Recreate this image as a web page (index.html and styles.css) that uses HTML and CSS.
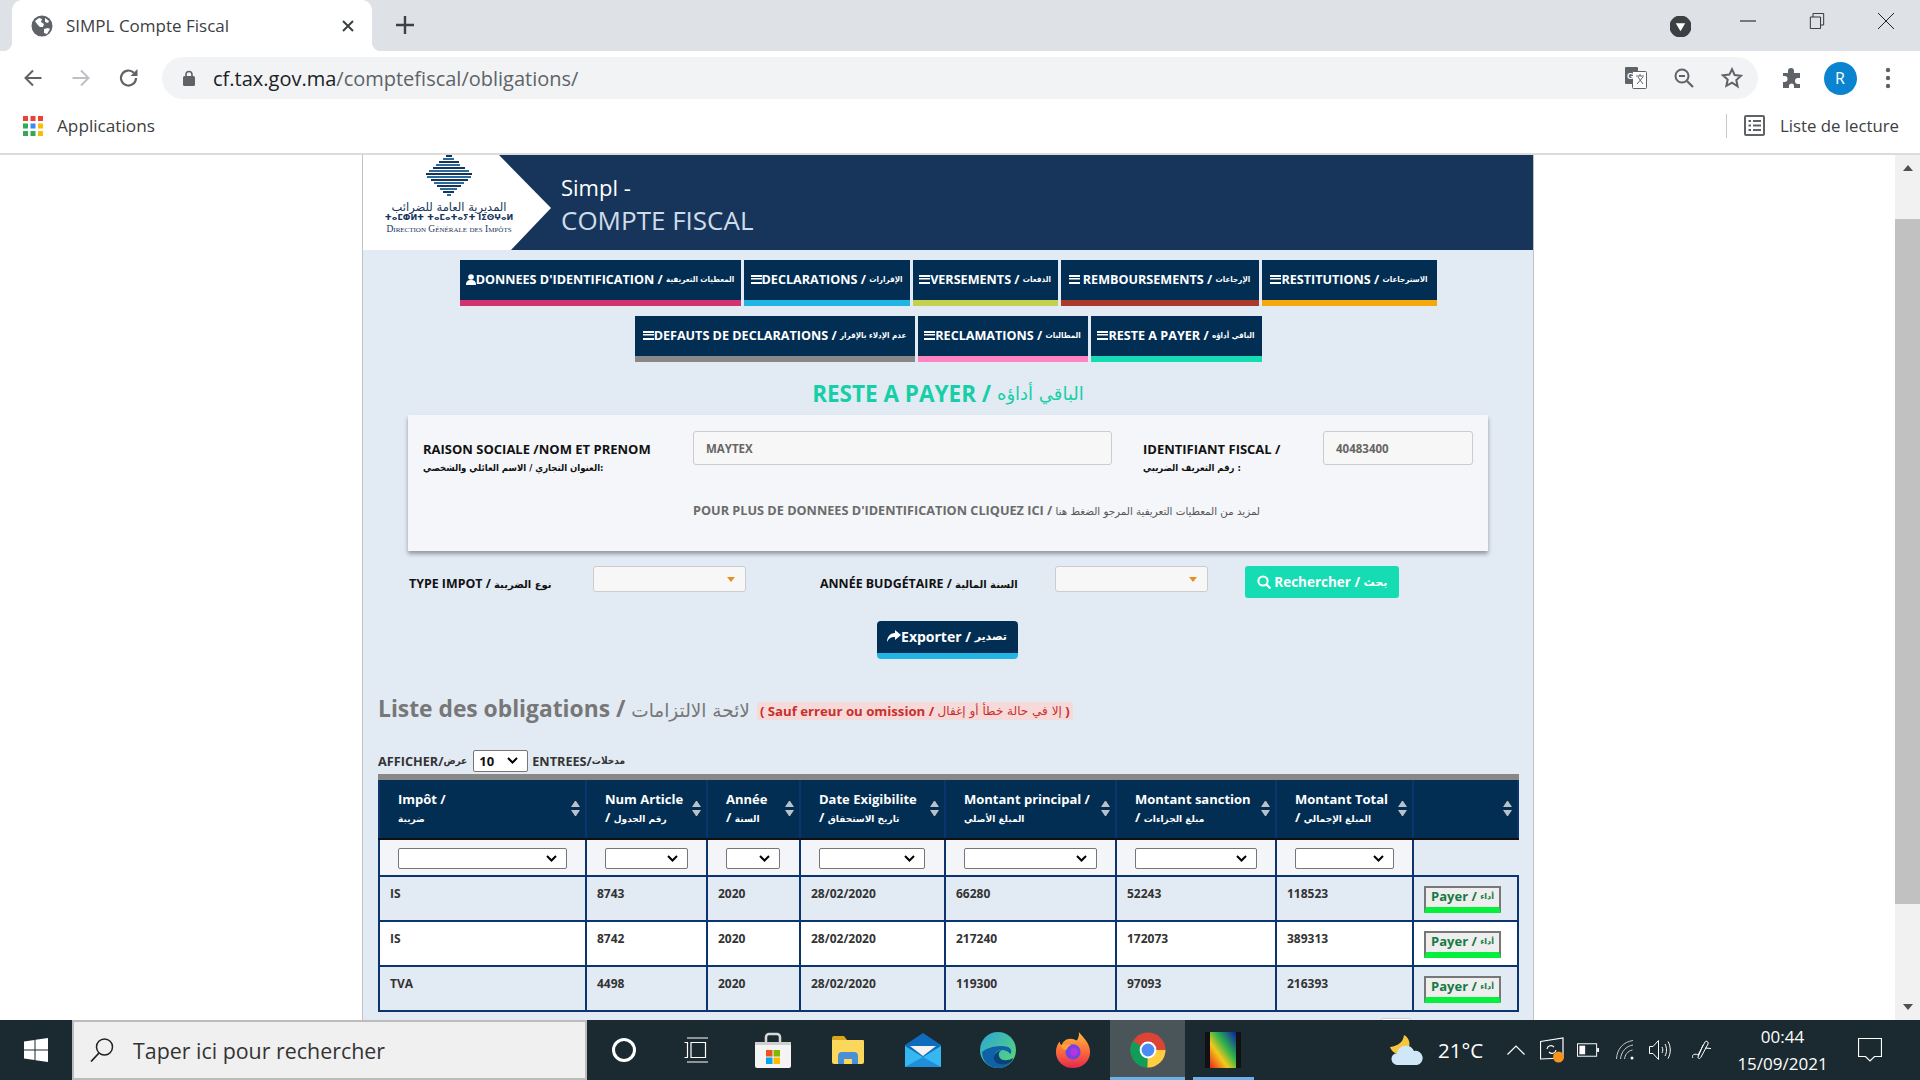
FILE: index.html
```html
<!DOCTYPE html>
<html lang="fr">
<head>
<meta charset="utf-8">
<title>SIMPL Compte Fiscal</title>
<link rel="stylesheet" href="styles.css">
</head>
<body>
<div class="screen">
  <header class="browser">
    <div class="tabstrip">
      <div class="tab">
        <svg class="favicon" viewBox="0 0 22 22"><circle cx="11" cy="11" r="10.5" fill="#5f6368"/><path d="M4 6l4-3 3 1-1 3 3 2-1 3h-3L6 9zM13 14l4-1 2 1-3 5-3-1zM14 3l4 3-1 2-3-1z" fill="#fff"/></svg>
        <span class="tab-title">SIMPL Compte Fiscal</span>
        <svg class="tab-close" viewBox="0 0 12 12"><path d="M1 1l10 10M11 1L1 11" stroke="#3c4043" stroke-width="2"/></svg>
      </div>
      <svg class="newtab" viewBox="0 0 18 18"><path d="M9 0v18M0 9h18" stroke="#3c4043" stroke-width="2.4"/></svg>
      <div class="win-group">
        <div class="tabsearch"><svg viewBox="0 0 20 20"><circle cx="10" cy="10" r="10.5" fill="#3c4043"/><path d="M5.5 7h9L10 14.5z" fill="#fff"/></svg></div>
        <div class="winbtn"><svg viewBox="0 0 16 16" class="winicon"><path d="M0 8h16" stroke="#111" stroke-width="1"/></svg></div>
        <div class="winbtn"><svg viewBox="0 0 16 18" class="winicon"><path d="M.5 4.500h11.500v13H.5zM3.500 4.500V.5h12v13H12" fill="none" stroke="#222" stroke-width="1"/></svg></div>
        <div class="winbtn"><svg viewBox="0 0 16 16" class="winicon"><path d="M0 0l16 16M16 0L0 16" stroke="#222" stroke-width="1"/></svg></div>
      </div>
    </div>
    <div class="toolbar">
      <div class="tool"><svg viewBox="0 0 20 20" class="ico20"><path d="M18.500 10H2.500M10 2.500L2.500 10l7.500 7.500" fill="none" stroke="#5f6368" stroke-width="2"/></svg></div>
      <div class="tool"><svg viewBox="0 0 20 20" class="ico20"><path d="M1.500 10h16M10 2.500l7.500 7.500-7.500 7.500" fill="none" stroke="#bdc1c6" stroke-width="2"/></svg></div>
      <div class="tool"><svg viewBox="0 0 22 22" class="ico22"><path d="M18 11a7.500 7.500 0 1 1-2.200-5.300" fill="none" stroke="#5f6368" stroke-width="2.200"/><path d="M19.500 2v7h-7z" fill="#5f6368"/></svg></div>
      <div class="omnibox">
        <svg class="lock" viewBox="0 0 12 16"><path d="M3 7V4.500a3 3 0 0 1 6 0V7" fill="none" stroke="#5f6368" stroke-width="1.600"/><rect x="0" y="6" width="12" height="10" rx="1.500" fill="#5f6368"/></svg>
        <span class="url"><span class="url-host">cf.tax.gov.ma</span>/comptefiscal/obligations/</span>
        <div class="omni-tools">
          <div class="tool"><svg viewBox="0 0 22 22" class="ico22"><rect x="0" y="0" width="13" height="17" rx="1" fill="#5f6368"/><rect x="7.500" y="4.500" width="14" height="17" rx="1" fill="#fff" stroke="#5f6368"/><text x="2" y="12" class="gly">G</text><path d="M11 9h8M15 7v2M12 17l6-7M13 10l5 7" stroke="#5f6368" stroke-width="1" fill="none"/></svg></div>
          <div class="tool"><svg viewBox="0 0 20 20" class="ico20"><circle cx="8" cy="8" r="6.500" fill="none" stroke="#5f6368" stroke-width="2"/><path d="M5 8h6" stroke="#5f6368" stroke-width="2"/><path d="M13 13l6 6" stroke="#5f6368" stroke-width="2.200"/></svg></div>
          <div class="tool"><svg viewBox="0 0 24 24" class="ico22"><path d="M12 2.500l2.900 6.300 6.900.8-5.100 4.600 1.400 6.800L12 17l-6.100 3.500 1.400-6.800-5.100-4.600 6.900-.8z" fill="none" stroke="#5f6368" stroke-width="2.200"/></svg></div>
        </div>
      </div>
      <div class="tool tool-first"><svg viewBox="0 0 22 22" class="ico22"><path d="M2 6h5V4a3 3 0 0 1 6 0v2h6v5h-2a3 3 0 0 0 0 6h2v4h-6v-2a2.500 2.500 0 0 0-5 0v2H2v-6h1.500a3 3 0 0 0 0-6H2z" fill="#5f6368"/></svg></div>
      <div class="tool"><span class="avatar">R</span></div>
      <div class="tool"><svg viewBox="0 0 6 22" class="dots"><circle cx="3" cy="3" r="2.200" fill="#5f6368"/><circle cx="3" cy="11" r="2.200" fill="#5f6368"/><circle cx="3" cy="19" r="2.200" fill="#5f6368"/></svg></div>
    </div>
    <div class="bookmarks">
      <svg class="apps" viewBox="0 0 20 20"><rect width="5" height="5" fill="#ea4335"/><rect x="7.500" width="5" height="5" fill="#ea4335"/><rect x="15" width="5" height="5" fill="#ea4335"/><rect y="7.500" width="5" height="5" fill="#34a853"/><rect x="7.500" y="7.500" width="5" height="5" fill="#4285f4"/><rect x="15" y="7.500" width="5" height="5" fill="#fbbc05"/><rect y="15" width="5" height="5" fill="#34a853"/><rect x="7.500" y="15" width="5" height="5" fill="#34a853"/><rect x="15" y="15" width="5" height="5" fill="#fbbc05"/></svg>
      <span class="bm-label">Applications</span>
      <span class="bm-sep"></span>
      <svg class="readlist" viewBox="0 0 21 21"><rect x="1" y="1" width="19" height="19" rx="1" fill="none" stroke="#5f6368" stroke-width="2"/><path d="M4.500 6h2.500M9 6h8M4.500 10.500h2.500M9 10.500h8M4.500 15h2.500M9 15h8" stroke="#5f6368" stroke-width="2"/></svg>
      <span class="bm-read">Liste de lecture</span>
    </div>
  </header>

  <main class="viewport">
    <div class="page">
      <div class="banner">
        <div class="logo">
          <svg class="diamond" viewBox="0 0 48 43">
            <g stroke-width="1.800">
              <path d="M21 1h6" stroke="#17355b"/>
              <path d="M18 4h11" stroke="#2a6a9c"/>
              <path d="M14 7h20" stroke="#17355b"/>
              <path d="M11 10h24" stroke="#2a6a9c"/>
              <path d="M8 13h32" stroke="#17355b"/>
              <path d="M4 16h40" stroke="#2a6a9c"/>
              <path d="M1 19h46" stroke="#17355b"/>
              <path d="M2 22h44" stroke="#2a6a9c"/>
              <path d="M6 25h37" stroke="#17355b"/>
              <path d="M9 28h30" stroke="#2a6a9c"/>
              <path d="M12 31h24" stroke="#17355b"/>
              <path d="M15 34h17" stroke="#2a6a9c"/>
              <path d="M18 37h11" stroke="#17355b"/>
              <path d="M22 40h4" stroke="#2a6a9c"/>
            </g>
          </svg>
          <div class="logo-ar">المديرية العامة للضرائب</div>
          <div class="logo-tz">ⵜⴰⵎⵀⵍⵜ ⵜⴰⵎⴰⵜⴰⵢⵜ ⵏⵉⵙⵖⴰⵍ</div>
          <div class="logo-fr">Direction Générale des Impôts</div>
        </div>
        <div class="banner-title">
          <div class="bt-1">Simpl -</div>
          <div class="bt-2">COMPTE FISCAL</div>
        </div>
      </div>

      <nav class="menu">
        <div class="menu-row">
          <a class="mbtn m-1 s-pink"><svg class="i-user" viewBox="0 0 10 11"><circle cx="5" cy="3" r="2.800" fill="#fff"/><path d="M0 11c0-4 2-5 5-5s5 1 5 5z" fill="#fff"/></svg>DONNEES D'IDENTIFICATION / <span class="ar">المعطيات التعريفية</span></a>
          <a class="mbtn m-2 s-blue"><span class="burger"></span>DECLARATIONS / <span class="ar">الإقرارات</span></a>
          <a class="mbtn m-3 s-olive"><span class="burger"></span>VERSEMENTS / <span class="ar">الدفعات</span></a>
          <a class="mbtn m-4 s-red"><span class="burger gap"></span>REMBOURSEMENTS / <span class="ar">الإرجاعات</span></a>
          <a class="mbtn m-5 s-orange"><span class="burger"></span>RESTITUTIONS / <span class="ar">الاسترجاعات</span></a>
        </div>
        <div class="menu-row">
          <a class="mbtn m-6 s-gray"><span class="burger"></span>DEFAUTS DE DECLARATIONS / <span class="ar">عدم الإدلاء بالإقرار</span></a>
          <a class="mbtn m-7 s-rose"><span class="burger"></span>RECLAMATIONS / <span class="ar">المطالبات</span></a>
          <a class="mbtn m-8 s-teal"><span class="burger"></span>RESTE A PAYER / <span class="ar">الباقي أداؤه</span></a>
        </div>
      </nav>

      <h1 class="page-title">RESTE A PAYER / <span class="ar-title">الباقي أداؤه</span></h1>

      <section class="card">
        <div class="card-grid">
          <div class="lbl">RAISON SOCIALE /NOM ET PRENOM<br><span class="ar-lbl">العنوان التجاري / الاسم العائلي والشخصي:</span></div>
          <div class="field">MAYTEX</div>
          <div class="lbl">IDENTIFIANT FISCAL /<br><span class="ar-lbl">رقم التعريف الضريبي :</span></div>
          <div class="field">40483400</div>
        </div>
        <p class="more">POUR PLUS DE DONNEES D'IDENTIFICATION CLIQUEZ ICI / <span class="ar-more">لمزيد من المعطيات التعريفية المرجو الضغط هنا</span></p>
      </section>

      <section class="filters">
        <div class="f-label f-l1">TYPE IMPOT / <span class="ar-f">نوع الضريبة</span></div>
        <div class="dd dd-1"></div>
        <div class="f-label f-l2">ANNÉE BUDGÉTAIRE / <span class="ar-f">السنة المالية</span></div>
        <div class="dd dd-2"></div>
        <button class="search-btn"><svg viewBox="0 0 14 14" class="i-search"><circle cx="6" cy="6" r="4.600" fill="none" stroke="#fff" stroke-width="2"/><path d="M9.500 9.500l4 4" stroke="#fff" stroke-width="2.200"/></svg> Rechercher / <span class="ar-btn">بحث</span></button>
      </section>

      <div class="export-row">
        <button class="export-btn"><svg viewBox="0 0 14 12" class="i-share"><path d="M8 0l6 5-6 5V7C4 7 2 8 0 12 0 7 3 3 8 3z" fill="#fff"/></svg>Exporter / <span class="ar-btn">تصدير</span></button>
      </div>

      <div class="list-head">
        <h2 class="list-title">Liste des obligations / <span class="ar-list">لائحة الالتزامات</span></h2>
        <span class="badge">( Sauf erreur ou omission / <span class="ar-badge">إلا في حالة خطأ أو إغفال</span> )</span>
      </div>

      <div class="entries">
        <span>AFFICHER/</span><span class="ar-sm">عرض</span>
        <select class="len-select"><option>10</option></select>
        <span>ENTREES/</span><span class="ar-sm">مدخلات</span>
      </div>

      <table class="grid">
        <colgroup>
          <col class="c1"><col class="c2"><col class="c3"><col class="c4"><col class="c5"><col class="c6"><col class="c7"><col class="c8">
        </colgroup>
        <thead>
          <tr>
            <th><div class="th-in"><span>Impôt /<br><span class="ar-th">ضريبة</span></span><i class="sort"></i></div></th>
            <th><div class="th-in"><span>Num Article<br>/ <span class="ar-th">رقم الجدول</span></span><i class="sort"></i></div></th>
            <th><div class="th-in"><span>Année<br>/ <span class="ar-th">السنة</span></span><i class="sort"></i></div></th>
            <th><div class="th-in"><span>Date Exigibilite<br>/ <span class="ar-th">تاريخ الاستحقاق</span></span><i class="sort"></i></div></th>
            <th><div class="th-in"><span>Montant principal /<br><span class="ar-th">المبلغ الأصلي</span></span><i class="sort"></i></div></th>
            <th><div class="th-in"><span>Montant sanction<br>/ <span class="ar-th">مبلغ الجزاءات</span></span><i class="sort"></i></div></th>
            <th><div class="th-in"><span>Montant Total<br>/ <span class="ar-th">المبلغ الإجمالي</span></span><i class="sort"></i></div></th>
            <th><div class="th-in th-end"><i class="sort"></i></div></th>
          </tr>
          <tr class="filter-row">
            <td><select class="fs fs1"></select></td>
            <td><select class="fs fs2"></select></td>
            <td><select class="fs fs3"></select></td>
            <td><select class="fs fs4"></select></td>
            <td><select class="fs fs5"></select></td>
            <td><select class="fs fs6"></select></td>
            <td><select class="fs fs7"></select></td>
            <td class="blank"></td>
          </tr>
        </thead>
        <tbody>
          <tr class="odd"><td>IS</td><td>8743</td><td>2020</td><td>28/02/2020</td><td>66280</td><td>52243</td><td>118523</td><td class="act"><button class="pay">Payer / <span class="ar-pay">أداء</span></button></td></tr>
          <tr class="even"><td>IS</td><td>8742</td><td>2020</td><td>28/02/2020</td><td>217240</td><td>172073</td><td>389313</td><td class="act"><button class="pay">Payer / <span class="ar-pay">أداء</span></button></td></tr>
          <tr class="odd"><td>TVA</td><td>4498</td><td>2020</td><td>28/02/2020</td><td>119300</td><td>97093</td><td>216393</td><td class="act"><button class="pay">Payer / <span class="ar-pay">أداء</span></button></td></tr>
        </tbody>
      </table>
      <div class="pager"><span class="pager-box"></span></div>
    </div>

    <div class="scrollbar">
      <svg class="sb-arrow" viewBox="0 0 10 6"><path d="M0 6l5-6 5 6z" fill="#505050"/></svg>
      <div class="sb-track"><div class="sb-thumb"></div></div>
      <svg class="sb-arrow" viewBox="0 0 10 6"><path d="M0 0l5 6 5-6z" fill="#505050"/></svg>
    </div>
  </main>

  <footer class="taskbar">
    <div class="start"><svg viewBox="0 0 24 24" class="winlogo"><path d="M0 3.500l10.500-1.500v9.500H0zM11.500 1.800L24 0v11.500H11.500zM0 12.500h10.500V22L0 20.500zM11.500 12.500H24V24l-12.500-1.800z" fill="#fff"/></svg></div>
    <div class="searchbox">
      <svg viewBox="0 0 24 24" class="mag"><circle cx="14.500" cy="9" r="8" fill="none" stroke="#222" stroke-width="1.500"/><path d="M9 15L1 23.500" stroke="#222" stroke-width="1.800"/></svg>
      <span class="search-text">Taper ici pour rechercher</span>
    </div>
    <div class="slot s-cortana"><span class="cortana"></span></div>
    <div class="slot s-taskview"><svg viewBox="0 0 24 26" class="taskview"><path d="M3 1h21M3 25h21M.5 5.500h3v15h-3M7 5.500h14.500v15H7z" fill="none" stroke="#fff" stroke-width="1.200"/></svg></div>
    <div class="slot"><svg viewBox="0 0 36 36" class="app"><path d="M11 10V5a3 3 0 0 1 3-3h8a3 3 0 0 1 3 3v5" fill="none" stroke="#d8d8d8" stroke-width="2.500"/><path d="M0 10h36v24a2 2 0 0 1-2 2H2a2 2 0 0 1-2-2z" fill="#f4f4f4"/><path d="M0 10h36v3H0z" fill="#cfcfcf"/><rect x="11" y="18" width="6.500" height="6.500" fill="#f25022"/><rect x="18.500" y="18" width="6.500" height="6.500" fill="#7fba00"/><rect x="11" y="25.500" width="6.500" height="6.500" fill="#00a4ef"/><rect x="18.500" y="25.500" width="6.500" height="6.500" fill="#ffb900"/></svg></div>
    <div class="slot"><svg viewBox="0 0 32 28" class="app-folder"><path d="M0 2a2 2 0 0 1 2-2h10l3 4H0z" fill="#d9a51f"/><path d="M0 4h31a1 1 0 0 1 1 1v21a2 2 0 0 1-2 2H2a2 2 0 0 1-2-2z" fill="#fbd75b"/><path d="M6 28v-8a4 4 0 0 1 4-4h12a4 4 0 0 1 4 4v8h-6v-5h-8v5z" fill="#4a90d9"/></svg></div>
    <div class="slot"><svg viewBox="0 0 36 36" class="app"><path d="M18 1L36 13v21a1 1 0 0 1-1 1H1a1 1 0 0 1-1-1V13z" fill="#0f6cbd"/><path d="M5 14h26l-13 10z" fill="#f2f2f2"/><path d="M0 14l18 11 18-11v21H0z" fill="#35b8f1"/><path d="M0 35l18-10 18 10z" fill="#1f8fdb"/></svg></div>
    <div class="slot"><svg viewBox="0 0 36 36" class="app"><defs><linearGradient id="eg" x1="0" y1="0" x2="1" y2="1"><stop offset="0" stop-color="#2aa6d8"/><stop offset="1" stop-color="#5fd86f"/></linearGradient></defs><circle cx="18" cy="18" r="18" fill="url(#eg)"/><path d="M2 20C2 30 10 36 18 36c5 0 9-2 12-5-6 2-13 1-15-4-2-5 2-9 6-9 5 0 8 2 9 4 2-1 2-5-2-7-9-3-22 1-26 5z" fill="#0f62a8"/><path d="M14 27c1 5 8 7 16 4 1-1 3-3 3-5-5 3-11 3-13 0-3-4 0-8 3-8-5 0-10 4-9 9z" fill="#0a4277"/></svg></div>
    <div class="slot"><svg viewBox="0 0 36 38" class="app"><defs><linearGradient id="fg" x1="0" y1="0" x2="0" y2="1"><stop offset="0" stop-color="#ffbd3f"/><stop offset=".5" stop-color="#ff7139"/><stop offset="1" stop-color="#e22850"/></linearGradient></defs><path d="M24 0c4 5 12 11 12 21 0 10-8 17-18 17S0 31 0 21c0-5 2-9 4-11 0 2 1 3 2 4 1-4 5-7 9-7 3 0 5 1 7 2 2-3 3-6 2-9z" fill="url(#fg)"/><circle cx="18" cy="21" r="8" fill="#7542e5"/><circle cx="19" cy="21" r="4" fill="#b833e1"/><path d="M5 14c3-1 8-2 11 0-3 1-4 3-5 5-3 0-5-2-6-5z" fill="#ffa436"/></svg></div>
    <div class="slot slot-active"><svg viewBox="0 0 36 36" class="app"><circle cx="18" cy="18" r="17.500" fill="#db4437"/><path d="M18 18L2.800 9A17.500 17.500 0 0 0 18 35.500z" fill="#0f9d58"/><path d="M18 18h17.500A17.500 17.500 0 0 1 18 35.500l-.6 0z" fill="#ffcd40"/><circle cx="18" cy="18" r="8.400" fill="#fff"/><circle cx="18" cy="18" r="6.400" fill="#4c8bf5"/></svg></div>
    <div class="slot slot-open"><svg viewBox="0 0 36 36" class="app"><defs><linearGradient id="rb" x1="0" y1="1" x2="1" y2="0"><stop offset="0" stop-color="#e8261a"/><stop offset=".35" stop-color="#f4c91b"/><stop offset=".6" stop-color="#32b44a"/><stop offset="1" stop-color="#0a1ea8"/></linearGradient></defs><rect x="0" width="36" height="36" fill="#111"/><rect x="5" width="26" height="36" fill="url(#rb)"/></svg></div>
    <div class="tray">
      <svg viewBox="0 0 34 30" class="t-weather"><path d="M14 0Q13 10 0 12A10 10 0 1 0 14 0z" fill="#f6c63b"/><path d="M8 30a6 6 0 0 1-1-12 9 9 0 0 1 17-2 7 7 0 0 1 3 14z" fill="#cfe7f7"/></svg>
      <span class="t-temp">21°C</span>
      <svg viewBox="0 0 18 10" class="t-caret"><path d="M.5 9.500L9 1l8.500 8.500" fill="none" stroke="#fff" stroke-width="1.200"/></svg>
      <svg viewBox="0 0 24 26" class="t-sync"><path d="M.5 4.500L23 1v20l-22.500 1z" fill="none" stroke="#fff" stroke-width="1.200"/><path d="M7 12a4 4 0 0 1 7-2M16 13a4 4 0 0 1-7 2" fill="none" stroke="#fff" stroke-width="1.200"/><circle cx="18.500" cy="20" r="5.500" fill="#f7931e"/></svg>
      <svg viewBox="0 0 24 14" class="t-batt"><rect x=".5" y=".5" width="20" height="13" fill="none" stroke="#fff"/><rect x="2.500" y="2.500" width="6" height="9" fill="#fff"/><path d="M21 5h2v4h-2z" fill="#fff"/></svg>
      <svg viewBox="0 0 18 20" class="t-wifi"><path d="M.5 19C1 9 7 2 17 .5M4.500 19C5 12 10 6 17 5M8.500 19c.5-4 3-8 8-9" fill="none" stroke="#c6cbcd" stroke-width="1"/><circle cx="16" cy="18" r="1.500" fill="#fff"/></svg>
      <svg viewBox="0 0 22 20" class="t-sound"><path d="M.5 6.500h3.500L9.500.5v19L4 13.500H.5z" fill="none" stroke="#fff" stroke-width="1"/><path d="M13 7c1 2 1 4 0 6M16 4c2 4 2 8 0 12M19 1.500c3 5 3 12 0 17" fill="none" stroke="#fff" stroke-width="1"/></svg>
      <svg viewBox="0 0 20 20" class="t-pen"><path d="M1 18c-2-3 2-5 5-3l7-13c1-2 4 0 3 2l-7 13c-1 2-3 2-3 0l5-12M13 8l6 .5" fill="none" stroke="#fff" stroke-width="1"/></svg>
      <div class="clock"><div>00:44</div><div>15/09/2021</div></div>
      <svg viewBox="0 0 24 24" class="t-notif"><path d="M.5.5h23v18h-7l-4.500 4.500-4.500-4.500h-7z" fill="none" stroke="#fff" stroke-width="1.200"/></svg>
    </div>
  </footer>
</div>
</body>
</html>
```

FILE: styles.css
```css
* { box-sizing: border-box; }
html, body { margin: 0; padding: 0; height: 100%; overflow: hidden; background: #fff; }
body { font-family: "Open Sans", "DejaVu Sans", sans-serif; color: #111; }
svg { display: block; flex: none; }
h1, h2, p { margin: 0; }

.screen { width: 1920px; height: 1080px; display: flex; flex-direction: column; }

/* Browser chrome */
.browser { flex: none; height: 155px; display: flex; flex-direction: column; border-bottom: 2px solid #dcdcdc; }
.tabstrip { height: 51px; background: #dee1e6; display: flex; align-items: flex-end; padding-left: 12px; }
.tab { width: 360px; height: 51px; background: #fff; border-radius: 10px 10px 0 0; display: flex; align-items: center; padding-left: 19px; position: relative; }
.tab::before, .tab::after { content: ""; position: absolute; bottom: 0; width: 9px; height: 9px; }
.tab::before { left: -9px; background: radial-gradient(circle at 0 0, transparent 9px, #fff 9.500px); }
.tab::after { right: -9px; background: radial-gradient(circle at 100% 0, transparent 9px, #fff 9.500px); }
.favicon { width: 22px; height: 22px; }
.tab-title { margin-left: 13px; width: 268px; font-size: 17px; color: #3c4043; white-space: nowrap; }
.tab-close { width: 12px; height: 12px; margin-left: 8px; }
.newtab { width: 18px; height: 18px; margin: 0 0 17px 24px; }
.win-group { margin-left: auto; height: 51px; display: flex; }
.tabsearch { width: 21px; margin-right: 22px; padding-top: 16px; }
.tabsearch svg { width: 21px; height: 21px; }
.winbtn { width: 69px; height: 51px; display: flex; justify-content: center; padding-top: 13px; }
.winicon { width: 16px; height: 16px; }

.toolbar { height: 54px; background: #fff; display: flex; align-items: center; padding-left: 9px; }
.tool { width: 48px; height: 42px; display: flex; align-items: center; justify-content: center; }
.tool-first { margin-left: 10px; }
.ico20 { width: 20px; height: 20px; }
.ico22 { width: 22px; height: 22px; }
.dots { width: 6px; height: 22px; }
.gly { font: bold 9px "Liberation Sans", sans-serif; fill: #fff; }
.avatar { width: 33px; height: 33px; border-radius: 50%; background: #0a84d0; color: #fff; font-size: 16px; display: flex; align-items: center; justify-content: center; }
.omnibox { width: 1596px; height: 42px; margin-left: 9px; background: #f1f3f4; border-radius: 21px; display: flex; align-items: center; padding-left: 21px; }
.lock { width: 12px; height: 16px; }
.url { margin-left: 18px; font-size: 20px; color: #5f6368; white-space: nowrap; }
.url-host { color: #202124; }
.omni-tools { margin-left: auto; margin-right: 2px; display: flex; }

.bookmarks { height: 48px; background: #fff; display: flex; align-items: center; padding: 0 0 7px 23px; }
.apps { width: 20px; height: 20px; }
.bm-label { margin-left: 14px; font-size: 17.200px; color: #3c4043; }
.bm-sep { margin-left: auto; width: 1px; height: 24px; background: #c6c8ca; }
.readlist { width: 21px; height: 21px; margin-left: 17px; }
.bm-read { margin-left: 15px; margin-right: 21px; font-size: 16.800px; color: #3c4043; white-space: nowrap; }

/* Viewport */
.viewport { flex: 1; min-height: 0; display: flex; overflow: hidden; background: #fff; }
.page { width: 1172px; margin-left: 362px; background: #e2eaf4; border-left: 1px solid #bfc3c8; border-right: 1px solid #bfc3c8; height: 1100px; flex: none; }
.scrollbar { margin-left: auto; width: 25px; background: #f1f1f1; display: flex; flex-direction: column; align-items: center; }
.sb-arrow { width: 10px; height: 6px; margin: 10px 0; flex: none; }
.sb-track { flex: 1; width: 100%; padding-top: 38px; padding-bottom: 90px; }
.sb-thumb { height: 100%; background: #c1c1c1; }

/* Banner */
.banner { height: 95px; background: #17355b; display: flex; align-items: stretch; }
.logo { width: 189px; background: #fff; clip-path: polygon(0 0, 136px 0, 188px 53px, 148px 95px, 0 95px); display: flex; flex-direction: column; align-items: center; padding-right: 17px; overflow: hidden; }
.diamond { width: 48px; height: 43px; }
.logo-ar { font-family: "DejaVu Sans", sans-serif; font-size: 11.500px; line-height: 12px; color: #17355b; margin-top: 3px; white-space: nowrap; }
.logo-tz { font-family: "DejaVu Sans", sans-serif; font-size: 8px; line-height: 10px; color: #17355b; font-weight: bold; white-space: nowrap; }
.logo-fr { font-family: "Liberation Serif", serif; font-size: 9.500px; line-height: 12px; color: #17355b; font-variant: small-caps; white-space: nowrap; }
.banner-title { margin-left: 9px; padding-top: 17px; }
.bt-1 { font-size: 22px; line-height: 30px; color: #fff; }
.bt-2 { font-size: 26px; line-height: 37px; color: #cfdcea; white-space: nowrap; }

/* Menu */
.menu { padding-top: 10px; display: flex; flex-direction: column; gap: 10px; align-items: center; }
.menu-row { display: flex; gap: 3px; }
.mbtn { height: 46px; padding-bottom: 2px; background: #032e54; color: #fff; font-size: 12.600px; font-weight: 700; display: flex; align-items: center; justify-content: center; white-space: pre; border-bottom: 6px solid; }
.m-1 { width: 281px; } .m-2 { width: 166px; } .m-3 { width: 145px; } .m-4 { width: 198px; } .m-5 { width: 175px; }
.m-6 { width: 280px; } .m-7 { width: 170px; } .m-8 { width: 171px; }
.s-pink { border-color: #d1336f; } .s-blue { border-color: #23b4e6; } .s-olive { border-color: #c4d14f; } .s-red { border-color: #ab3a2c; } .s-orange { border-color: #f5a80a; }
.s-gray { border-color: #888; } .s-rose { border-color: #ff85c2; } .s-teal { border-color: #16dcb4; }
.ar { font-family: "DejaVu Sans Condensed", "DejaVu Sans", sans-serif; font-size: 8px; font-weight: 700; }
.i-user { width: 10px; height: 11px; }
.burger { width: 11px; height: 9px; border-top: 2px solid #fff; border-bottom: 2px solid #fff; flex: none; background: linear-gradient(#fff, #fff) center/100% 1.500px no-repeat; }
.burger.gap { margin-right: 3px; }

.page-title { height: 53px; padding-top: 9px; display: flex; align-items: center; justify-content: center; font-size: 22.500px; font-weight: 700; color: #16cfa6; white-space: pre; }
.ar-title { font-family: "DejaVu Sans", sans-serif; font-size: 18px; font-weight: 400; }

/* Card */
.card { margin-left: 45px; width: 1080px; height: 136px; background: #f4f6f9; box-shadow: 0 3px 4px rgba(0, 0, 0, .35); padding: 16px 15px 0; }
.card-grid { display: grid; grid-template-columns: 270px 419px 211px 150px; }
.lbl { font-size: 13px; font-weight: 700; line-height: 18px; padding-top: 9px; color: #111; }
.lbl:nth-child(3) { padding-left: 31px; }
.ar-lbl { font-family: "DejaVu Sans Condensed", "DejaVu Sans", sans-serif; font-size: 9.500px; font-weight: 700; display: block; line-height: 20px; }
.field { height: 34px; background: #f7f7f7; border: 1px solid #ccc; border-radius: 3px; padding-left: 12px; font-size: 11.500px; font-weight: 700; color: #666; display: flex; align-items: center; }
.more { margin-top: 22px; padding-left: 270px; font-size: 12.700px; font-weight: 700; color: #6b6b6b; white-space: pre; line-height: 20px; }
.ar-more { font-family: "DejaVu Sans", sans-serif; font-size: 10.300px; font-weight: 400; color: #555; }

/* Filters */
.filters { margin: 15px 0 0 46px; display: flex; align-items: flex-start; height: 32px; }
.f-label { font-size: 12.400px; font-weight: 700; line-height: 36px; white-space: pre; color: #111; }
.ar-f { font-family: "DejaVu Sans", sans-serif; font-size: 10px; font-weight: 700; }
.f-l1 { width: 184px; } .f-l2 { width: 235px; margin-left: 74px; }
.dd { height: 26px; background: #f7f7f7; border: 1px solid #ccc; border-radius: 3px; position: relative; }
.dd::after { content: ""; position: absolute; right: 10px; top: 10px; border: 4px solid transparent; border-top: 5px solid #e8901e; border-bottom: 0; }
.dd-1 { width: 153px; } .dd-2 { width: 153px; }
.search-btn { margin-left: 37px; width: 154px; height: 32px; background: #16dcb4; border: 0; border-radius: 3px; color: #fff; font: 700 13.500px "Open Sans", sans-serif; display: flex; align-items: center; justify-content: center; white-space: pre; padding: 0; }
.i-search { width: 14px; height: 14px; }
.ar-btn { font-family: "DejaVu Sans", sans-serif; font-size: 11px; }

.export-row { margin-top: 23px; padding-right: 2px; display: flex; justify-content: center; }
.export-btn { width: 141px; height: 38px; background: #032e54; border: 0; border-bottom: 6px solid #23b4e6; border-radius: 4px; color: #fff; font: 700 14px "Open Sans", sans-serif; display: flex; align-items: center; justify-content: center; white-space: pre; padding: 0 0 2px; }
.i-share { width: 14px; height: 12px; }

/* List */
.list-head { margin: 37px 0 0 15px; height: 24px; display: flex; align-items: center; }
.list-title { font-size: 22.800px; font-weight: 700; color: #777; white-space: pre; }
.ar-list { font-family: "DejaVu Sans", sans-serif; font-size: 18.500px; font-weight: 400; }
.badge { margin: 6px 0 0 7px; height: 18px; background: #f6d9d9; border-radius: 3px; color: #c8302c; font-size: 13.200px; font-weight: 700; padding: 0 3px; display: flex; align-items: center; white-space: pre; }
.ar-badge { font-family: "DejaVu Sans", sans-serif; font-size: 12px; font-weight: 400; }

.entries { margin: 30px 0 0 15px; height: 24px; padding-bottom: 3px; display: flex; align-items: center; font-size: 12.700px; font-weight: 700; color: #333; white-space: nowrap; }
.ar-sm { font-family: "DejaVu Sans Condensed", "DejaVu Sans", sans-serif; font-size: 10px; }
.len-select, .fs { appearance: none; background: #fff url("data:image/svg+xml,%3Csvg xmlns='http://www.w3.org/2000/svg' width='11' height='7'%3E%3Cpath d='M1 1l4.500 4.500L10 1' fill='none' stroke='%23000' stroke-width='2'/%3E%3C/svg%3E") no-repeat right 9px center; border: 1px solid #767676; border-radius: 2px; }
.len-select { width: 55px; height: 22px; margin: 0 4px 0 6px; padding-left: 5px; font: 700 13px "Open Sans", sans-serif; color: #111; }

/* Table */
.grid { margin-left: 15px; width: 1139px; table-layout: fixed; border-collapse: collapse; }
.c1 { width: 207px; } .c2 { width: 121px; } .c3 { width: 93px; } .c4 { width: 145px; } .c5 { width: 171px; } .c6 { width: 160px; } .c7 { width: 137px; } .c8 { width: 105px; }
.grid th { height: 62px; padding: 0 5px 2px 18px; background: #032e54; color: #fff; border-top: 6px solid #888; border-left: 2px solid #0c3570; border-right: 2px solid #0c3570; border-bottom: 2px solid #111; font-size: 13px; font-weight: 700; text-align: left; line-height: 18px; vertical-align: middle; }
.th-in { display: flex; align-items: center; justify-content: space-between; white-space: nowrap; }
.th-end { justify-content: flex-end; padding-right: 0; }
.ar-th { font-family: "DejaVu Sans", sans-serif; font-size: 9px; font-weight: 700; line-height: 1; }
.sort { width: 9px; height: 15px; flex: none; display: flex; flex-direction: column; justify-content: space-between; }
.sort::before { content: ""; border-left: 4.500px solid transparent; border-right: 4.500px solid transparent; border-bottom: 6.500px solid #b9c1ca; }
.sort::after { content: ""; border-left: 4.500px solid transparent; border-right: 4.500px solid transparent; border-top: 6.500px solid #b9c1ca; }
.filter-row td { height: 37px; background: #f3f5f8; border: 2px solid #0c3570; border-top: 2px solid #111; padding: 2px 0 0 18px; }
.filter-row td.blank { background: #e2eaf4; border-right: 1px solid #e2eaf4; }
.fs { display: block; height: 21px; }
.fs1 { width: 169px; } .fs2 { width: 83px; } .fs3 { width: 54px; } .fs4 { width: 106px; } .fs5 { width: 133px; } .fs6 { width: 122px; } .fs7 { width: 99px; }
tbody td { height: 45px; border: 2px solid #0c3570; padding: 8px 0 0 10px; vertical-align: top; font-size: 12px; font-weight: 700; color: #333; line-height: 18px; }
tbody tr.odd td { background: #e2eaf4; }
tbody tr.even td { background: #fff; }
tbody td.act { padding: 9px 0 0 10px; }
.pay { width: 77px; height: 27px; padding: 0 0 3px; background: #eee; border: 2px solid #777; border-bottom: 6px solid #05f03c; color: #157a45; font: 700 13px "Open Sans", sans-serif; white-space: pre; display: flex; align-items: center; justify-content: center; }
.ar-pay { font-family: "DejaVu Sans", sans-serif; font-size: 8px; }

.pager { margin-top: 6px; display: flex; padding-left: 1018px; }
.pager-box { width: 30px; height: 30px; background: #fff; border: 1px solid #ccc; border-radius: 2px; }

/* Taskbar */
.taskbar { flex: none; height: 60px; background: #1b2a30; display: flex; align-items: center; color: #fff; }
.start { width: 72px; display: flex; justify-content: center; }
.winlogo { width: 24px; height: 24px; }
.searchbox { width: 515px; height: 60px; background: #f0f0f0; border: 2px solid #bcbcbc; display: flex; align-items: center; padding-left: 16px; }
.mag { width: 24px; height: 24px; }
.search-text { margin-left: 19px; font-size: 21.400px; color: #333; white-space: nowrap; }
.slot { width: 75px; height: 60px; display: flex; align-items: center; justify-content: center; position: relative; }
.s-cortana { width: 73px; }
.s-taskview { padding-right: 4px; }
.cortana { width: 24px; height: 24px; border-radius: 50%; border: 3px solid #fff; }
.taskview { width: 24px; height: 26px; }
.app { width: 36px; height: 36px; }
.app-folder { width: 32px; height: 28px; }
.slot-active { background: #4a5559; box-shadow: inset 0 -3px 0 #6cb0e5; }
.slot-open::after { content: ""; position: absolute; left: 8px; right: 6px; bottom: 0; height: 3px; background: #6cb0e5; }
.tray { margin-left: auto; display: flex; align-items: center; padding-right: 38px; }
.t-weather { width: 34px; height: 30px; }
.t-temp { margin-left: 14px; width: 42px; font-size: 20.500px; white-space: nowrap; }
.t-caret { margin-left: 27px; width: 18px; height: 10px; }
.t-sync { margin-left: 15px; width: 24px; height: 26px; }
.t-batt { margin-left: 13px; width: 23px; height: 14px; }
.t-wifi { margin-left: 16px; width: 18px; height: 20px; }
.t-sound { margin-left: 15px; width: 22px; height: 20px; }
.t-pen { margin-left: 21px; width: 20px; height: 20px; }
.clock { margin-left: 25px; width: 91px; text-align: center; font-size: 17px; line-height: 27px; white-space: nowrap; }
.t-notif { margin-left: 30px; width: 24px; height: 24px; }
```
